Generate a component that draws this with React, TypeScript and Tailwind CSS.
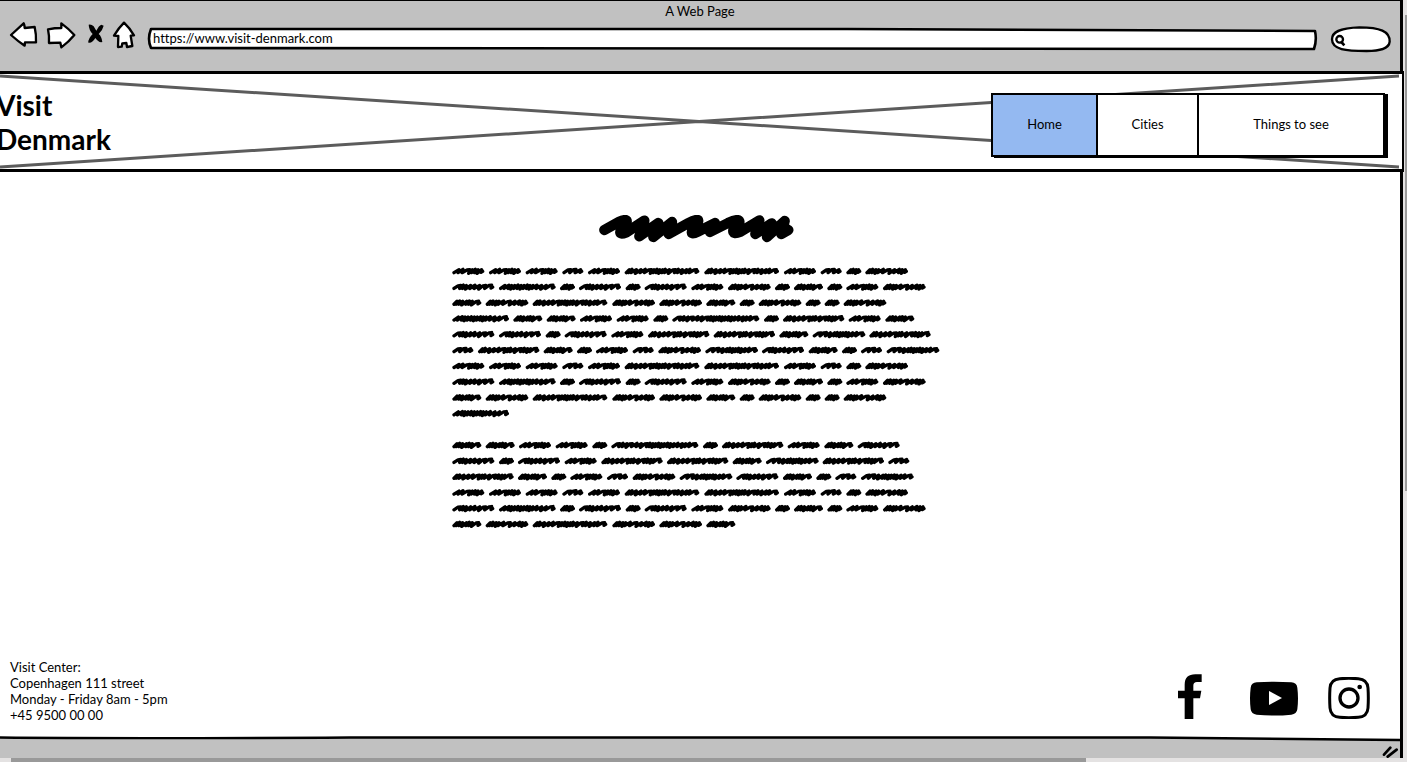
import React from "react";

type Stroke = { advance: number; steps: number[] };

// Scribbled words, measured in thirds of a pixel. Each step is one zigzag of the pen.
const WORDS: Record<string, Stroke> = {
  a: { advance: 57, steps: [8, 7, 9, 7] },
  b: { advance: 77, steps: [19, 16, 14] },
  c: { advance: 110, steps: [14, 12, 20, 8, 9, 8, 11] },
  d: { advance: 100, steps: [8, 8, 9, 12, 8, 9, 19] },
  e: { advance: 140, steps: [19, 8, 9, 13, 13, 14, 18, 18] },
  f: { advance: 141, steps: [8, 8, 10, 8, 14, 20, 14, 14, 9, 9] },
  g: { advance: 183, steps: [12, 12, 8, 9, 10, 9, 9, 10, 8, 9, 12, 14, 14, 20] },
  h: { advance: 239, steps: [8, 8, 13, 14, 13, 18, 8, 9, 8, 9, 8, 12, 18, 9, 12, 13, 10, 20] },
  i: { advance: 197, steps: [8, 8, 13, 14, 14, 18, 9, 8, 14, 18, 9, 10, 9, 18] },
  j: { advance: 170, steps: [19, 16, 12, 13, 8, 9, 8, 9, 8, 12, 12, 18] },
  k: { advance: 275, steps: [19, 10, 12, 16, 14, 13, 18, 8, 9, 8, 9, 8, 9, 10, 9, 10, 12, 13, 10, 12, 18] },
};

const FIRST = ["cccbchhcbaf", "egaeaecfadacf", "dfhffdafaaf"];
const PARAGRAPH_ONE = [...FIRST, "gddccakaicd", "eeaeciidji", "bidacbfjedabj", ...FIRST, "g"];
const PARAGRAPH_TWO = ["ddccakaicde", "eaeciidjib", "idacbfjedabj", FIRST[0], FIRST[1], "dfhffd"];

function scribble(line: string, y: number) {
  let x = 4;
  let d = "";
  for (const key of line) {
    const word = WORDS[key];
    let p = x + 2;
    d += `M${p} ${y + 4}`;
    word.steps.forEach((s, n) => {
      const wide = s > 15;
      const top = y - 5 - (n % 3 === 1 ? 1 : 0);
      const low = y + 4 + (n % 3 === 2 ? 2 : 0);
      p += s;
      if (wide) d += `L${p - 7} ${top + 1}`;
      d += `L${p + 1} ${top}`;
      if (n < word.steps.length - 1) d += `L${p - 2} ${low}`;
      else d += `L${p - 1} ${y + 3}L${p + 4} ${y}`;
    });
    x += word.advance;
  }
  return d;
}

function Paragraph({ lines }: { lines: string[] }) {
  const height = Math.ceil(lines.length * 15.8);
  return (
    <svg
      className="block w-full"
      viewBox={`0 0 1464 ${height * 3}`}
      fill="none"
      stroke="black"
      strokeWidth="10"
      strokeLinecap="round"
      strokeLinejoin="round"
      role="img"
      aria-label="Paragraph"
    >
      {lines.map((line, i) => (
        <path key={i} d={scribble(line, 25 + i * 47.4)} />
      ))}
    </svg>
  );
}

const ink = {
  fill: "white",
  stroke: "black",
  strokeWidth: 7,
  strokeLinejoin: "round" as const,
  strokeLinecap: "round" as const,
};

function Toolbar() {
  return (
    <div className="flex items-start gap-1 pr-2 pl-[9px]">
      <button aria-label="Back">
        <svg className="block h-7 w-8" viewBox="27 63 96 84">
          <path {...ink} d="M33 105L71 70Q74 76 74 84L104 81Q109 103 108 127L75 127L74 137Q54 124 33 105Z" />
        </svg>
      </button>
      <button aria-label="Forward">
        <svg className="block h-7 w-9" viewBox="135 63 108 84">
          <path {...ink} d="M144 88Q164 84 184 84L184 70Q206 86 223 105Q206 126 184 142L181 128L147 129Q148 106 144 88Z" />
        </svg>
      </button>
      <button aria-label="Stop">
        <svg className="block h-7 w-[22px]" viewBox="255 63 66 84">
          <path d="M266 74Q274 72 281 79L289 92Q297 76 304 74L311 77Q308 91 296 102Q305 109 307 126Q296 129 286 114Q276 131 265 128Q264 116 278 102Q267 91 266 74Z" />
        </svg>
      </button>
      <button aria-label="Home page">
        <svg className="block h-7 w-7" viewBox="333 63 84 84">
          <path {...ink} d="M372 68Q389 84 402 106L392 107L397 138L381 141L379 129L367 130L365 140L354 141L355 108L342 107Q355 85 372 68Z" />
        </svg>
      </button>
      <div className="relative mt-1 ml-1 h-7 min-w-0 flex-1">
        <svg className="absolute inset-0 h-full w-full" viewBox="0 0 1170 28" preserveAspectRatio="none">
          <path
            d="M4 4L700 4L1167 6Q1169 15 1166 24L4 23Q0 14 4 4Z"
            fill="white"
            stroke="black"
            strokeWidth="2.6"
            strokeLinejoin="round"
          />
        </svg>
        <input
          aria-label="Address"
          defaultValue="https://www.visit-denmark.com"
          className="relative block h-[26px] w-full bg-transparent px-[6px] text-[13px] outline-none"
        />
      </div>
      <div className="relative ml-2 h-7 w-[62px]">
        <svg className="mt-1 block h-7 w-[62px]" viewBox="1112 75 186 84">
          <path {...ink} d="M1118 118C1118 96 1140 84 1200 82C1262 82 1292 94 1291 125C1289 148 1260 153 1222 153C1160 153 1118 149 1118 118Z" />
          <circle cx="1141" cy="118" r="10" fill="none" stroke="black" strokeWidth="7" />
          <path d="M1146 126L1155 136" stroke="black" strokeWidth="8" />
        </svg>
        <input aria-label="Search" className="absolute inset-y-1 right-2 left-5 w-8 bg-transparent text-[13px] outline-none" />
      </div>
    </div>
  );
}

function Banner() {
  return (
    <header className="relative -mr-1 flex h-[101px] items-start justify-between border-y-[3px] border-r-2 border-black bg-white">
      <svg className="absolute inset-0 h-full w-full" viewBox="0 0 1402 95" preserveAspectRatio="none">
        <path d="M0 2L1399 93M0 93L1399 2" stroke="#5c5c5c" strokeWidth="3" />
      </svg>
      <h1 className="relative -ml-1 pt-[14px] text-[28px] leading-[34px] font-bold">
        Visit
        <br />
        Denmark
      </h1>
      <nav className="relative mt-[19px] mr-[17px] flex h-16 border-2 border-black bg-white text-[13px] shadow-[3px_1px_0_black]">
        <a href="#home" className="flex w-[105px] items-center justify-center border-r-2 border-black bg-[#94b9f1]">
          Home
        </a>
        <a href="#cities" className="flex w-[101px] items-center justify-center border-r-2 border-black">
          Cities
        </a>
        <a href="#things" className="flex w-[184px] items-center justify-center">
          Things to see
        </a>
      </nav>
    </header>
  );
}

function SocialLinks() {
  return (
    <div className="flex items-end gap-[30px] pr-[30px]">
      <a href="#facebook" aria-label="Facebook" className="mr-[18px]">
        <svg className="block h-[45px] w-6" viewBox="85 100 72 135">
          <path d="M156 101L156 124L142 124Q131 124 131 135L131 150L155 150L151 173L131 173L131 235L105 235L105 173L85 173L85 150L105 150L105 132Q105 101 137 101Z" />
        </svg>
      </a>
      <a href="#youtube" aria-label="YouTube">
        <svg className="block h-[38px] w-12" viewBox="300 121 144 114">
          <path d="M320 125Q372 121 424 125Q440 126 442 141Q446 173 442 206Q440 221 424 222Q372 227 320 222Q304 221 302 206Q298 173 302 141Q304 126 320 125Z" />
          <path d="M357 151L396 172L357 193Z" fill="white" />
        </svg>
      </a>
      <a href="#instagram" aria-label="Instagram">
        <svg className="block h-[42px] w-[42px]" viewBox="533 110 126 126" fill="none" stroke="black">
          <path
            strokeWidth="9"
            d="M568 115Q595 113 624 115Q651 117 653 143Q655 173 653 203Q651 229 624 231Q595 233 568 231Q541 229 539 203Q537 173 539 143Q541 117 568 115Z"
          />
          <circle cx="596" cy="173" r="27" strokeWidth="10" />
          <circle cx="628" cy="140" r="7" fill="black" stroke="none" />
        </svg>
      </a>
    </div>
  );
}

export default function App() {
  return (
    <div className="flex min-h-screen flex-col overflow-hidden bg-[#e4e2e2] font-['Lato','Liberation_Sans',sans-serif] text-black [font-variant-ligatures:none]">
      <div className="flex flex-1">
        <div className="flex min-w-0 flex-1 flex-col border-t border-r-[3px] border-black bg-white">
          <div className="h-[70px] bg-[#c1c1c1]">
            <div className="h-5 text-center text-[13px] leading-5">A Web Page</div>
            <Toolbar />
          </div>
          <Banner />
          <main className="flex flex-col items-center pt-[43px] pr-2">
            <svg className="block h-7 w-[195px]" viewBox="27 30 585 84" role="img" aria-label="Heading">
              <path
                d="M43 75L86 51Q119 36 107 58L92 77Q86 91 109 82L163 47L148 94L205 54L190 96L246 51L236 87L294 55Q334 34 322 56L307 76Q300 92 324 80L375 54L360 81L414 54Q455 35 447 57L430 75Q427 90 452 80L508 46L496 87L545 55L531 96L584 48L574 87L595 75M160 68L240 70M498 68L588 70"
                fill="none"
                stroke="black"
                strokeWidth="31"
                strokeLinecap="round"
                strokeLinejoin="round"
              />
            </svg>
            <div className="mt-5 flex w-[488px] flex-col gap-4">
              <Paragraph lines={PARAGRAPH_ONE} />
              <Paragraph lines={PARAGRAPH_TWO} />
            </div>
          </main>
          <footer className="mt-auto flex items-end justify-between pb-[13px] pl-[10px]">
            <address className="text-[13px] leading-4 not-italic">
              Visit Center:
              <br />
              Copenhagen 111 street
              <br />
              Monday - Friday 8am - 5pm
              <br />
              +45 9500 00 00
            </address>
            <div className="pb-1">
              <SocialLinks />
            </div>
          </footer>
          <div className="relative h-[22px]">
            <svg className="absolute inset-0 h-full w-full" viewBox="0 0 1400 22" preserveAspectRatio="none">
              <path d="M-4 1.5Q120 2.8 350 1.5L1150 1.5L1404 4L1404 30L-4 30Z" fill="#c1c1c1" stroke="black" strokeWidth="2.4" />
            </svg>
            <svg className="absolute right-0 bottom-0 h-3 w-[18px]" viewBox="696 318 54 36">
              <path d="M702 344L721 323M713 350L740 329" stroke="black" strokeWidth="8" strokeLinecap="round" />
            </svg>
          </div>
        </div>
        <div className="flex w-1 flex-col items-end pt-[15px]">
          <div className="h-[64%] w-0.5 bg-[#999]" />
        </div>
      </div>
      <div className="h-1 bg-[#e4e2e2] pl-[11px]">
        <div className="h-full w-[77%] bg-[#999]" />
      </div>
    </div>
  );
}
